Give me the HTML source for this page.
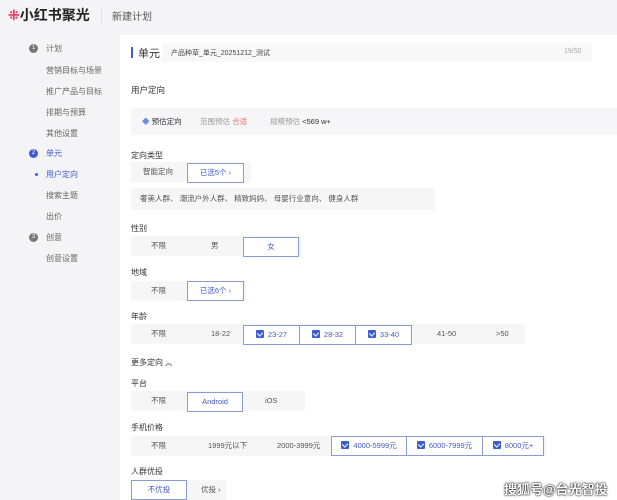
<!DOCTYPE html>
<html><head><meta charset="utf-8"><style>
*{margin:0;padding:0;box-sizing:border-box}
body{width:617px;height:500px;overflow:hidden;background:#f4f4f6;font-family:"Liberation Sans","Noto Sans CJK SC",sans-serif;color:#333;position:relative;font-size:8px}
.a{position:absolute;white-space:nowrap}
.side{color:#666;font-size:8px}
.dot{width:9px;height:9px;border-radius:50%;background:#777;color:#fff;font-size:6px;text-align:center;line-height:9px}
.card{position:absolute;left:120px;top:35px;width:497px;height:465px;background:#fff}
.lbl{font-size:8px;color:#333}
.bar{position:absolute;background:#f6f6f7;height:20px}
.btn{position:absolute;height:20px;border:1px solid #8a9bd6;background:#fff;color:#4459c2;font-size:7.5px;text-align:center;line-height:18px}
.cb{display:inline-block;width:8px;height:8px;background:#3d5ed0;border-radius:1px;vertical-align:-1px;margin-right:4px;position:relative}
.cb:after{content:"";position:absolute;left:2px;top:1px;width:3px;height:4px;border:solid #fff;border-width:0 1px 1px 0;transform:rotate(45deg)}
.t{position:absolute;font-size:7.5px;color:#555;line-height:20px}
</style></head><body>
<div class="a" style="left:8px;top:5px;font-size:14px;font-weight:bold;color:#222"><span style="color:#e8365d">⁜</span>小红书聚光</div>
<div class="a" style="left:101px;top:10px;width:1px;height:12px;background:#ddd"></div>
<div class="a" style="left:112px;top:8px;font-size:10px;color:#555">新建计划</div>

<div class="a dot" style="left:29px;top:44px">1</div><div class="a side" style="left:46px;top:43px">计划</div>
<div class="a side" style="left:46px;top:65px">营销目标与场景</div>
<div class="a side" style="left:46px;top:86px">推广产品与目标</div>
<div class="a side" style="left:46px;top:107px">排期与预算</div>
<div class="a side" style="left:46px;top:128px">其他设置</div>
<div class="a dot" style="left:29px;top:149px;background:#3d5ed0">2</div><div class="a side" style="left:46px;top:148px;color:#3d5ed0">单元</div>
<div class="a" style="left:35px;top:173px;width:3px;height:3px;border-radius:50%;background:#3d5ed0"></div><div class="a side" style="left:46px;top:169px;color:#3d5ed0">用户定向</div>
<div class="a side" style="left:46px;top:190px">搜索主题</div>
<div class="a side" style="left:46px;top:211px">出价</div>
<div class="a dot" style="left:29px;top:233px">3</div><div class="a side" style="left:46px;top:232px">创意</div>
<div class="a side" style="left:46px;top:253px">创意设置</div>

<div class="card"></div>
<div class="a" style="left:131px;top:47px;width:2px;height:11px;background:#3d5ed0"></div>
<div class="a" style="left:138px;top:45px;font-size:11px;color:#333">单元</div>
<div class="a" style="left:162px;top:43px;width:430px;height:19px;background:#f8f8f9"></div>
<div class="a" style="left:171px;top:48px;font-size:7px;color:#444">产品种草_单元_20251212_测试</div>
<div class="a" style="left:564px;top:48px;font-size:7px;color:#aaa">19/50</div>
<div class="a lbl" style="left:131px;top:84px;font-size:8.5px">用户定向</div>
<div class="a" style="left:131px;top:108px;width:486px;height:27px;background:#f6f6f8"></div>
<div class="a" style="left:142px;top:116px;font-size:7.5px;color:#333"><span style="color:#6b8be0">◆</span> 预估定向</div>
<div class="a" style="left:200px;top:116px;font-size:7.5px;color:#999">范围预估 <span style="color:#f06a6a">合适</span></div>
<div class="a" style="left:270px;top:116px;font-size:7.5px;color:#999">规模预估 <span style="color:#333">&lt;569 w+</span></div>

<div class="a lbl" style="left:131px;top:150px">定向类型</div>
<div class="bar" style="left:131px;top:162px;width:120px"></div>
<div class="t" style="left:143px;top:162px">智能定向</div>
<div class="btn" style="left:187px;top:163px;width:57px">已选5个 ›</div>
<div class="bar" style="left:131px;top:188px;width:304px;height:22px"></div>
<div class="t" style="left:140px;top:189px">奢美人群、 潮流户外人群、 精致妈妈、 母婴行业意向、 健身人群</div>

<div class="a lbl" style="left:131px;top:223px">性别</div>
<div class="bar" style="left:131px;top:236px;width:170px"></div>
<div class="t" style="left:151px;top:236px">不限</div><div class="t" style="left:211px;top:236px">男</div>
<div class="btn" style="left:243px;top:237px;width:56px">女</div>

<div class="a lbl" style="left:131px;top:267px">地域</div>
<div class="bar" style="left:131px;top:281px;width:115px"></div>
<div class="t" style="left:151px;top:281px">不限</div>
<div class="btn" style="left:187px;top:281px;width:57px">已选6个 ›</div>

<div class="a lbl" style="left:131px;top:311px">年龄</div>
<div class="bar" style="left:131px;top:324px;width:394px"></div>
<div class="t" style="left:151px;top:324px">不限</div><div class="t" style="left:211px;top:324px">18-22</div>
<div class="btn" style="left:243px;top:325px;width:57px"><span class="cb"></span>23-27</div>
<div class="btn" style="left:299px;top:325px;width:57px"><span class="cb"></span>28-32</div>
<div class="btn" style="left:355px;top:325px;width:57px"><span class="cb"></span>33-40</div>
<div class="t" style="left:437px;top:324px">41-50</div><div class="t" style="left:496px;top:324px">&gt;50</div>

<div class="a lbl" style="left:131px;top:357px">更多定向 <span style="font-size:7px">︽</span></div>
<div class="a lbl" style="left:131px;top:378px">平台</div>
<div class="bar" style="left:131px;top:391px;width:174px"></div>
<div class="t" style="left:151px;top:391px">不限</div>
<div class="btn" style="left:187px;top:392px;width:56px">Android</div>
<div class="t" style="left:265px;top:391px">iOS</div>

<div class="a lbl" style="left:131px;top:422px">手机价格</div>
<div class="bar" style="left:131px;top:436px;width:415px"></div>
<div class="t" style="left:151px;top:436px">不限</div><div class="t" style="left:208px;top:436px">1999元以下</div><div class="t" style="left:277px;top:436px">2000-3999元</div>
<div class="btn" style="left:331px;top:436px;width:76px"><span class="cb"></span>4000-5999元</div>
<div class="btn" style="left:406px;top:436px;width:77px"><span class="cb"></span>6000-7999元</div>
<div class="btn" style="left:482px;top:436px;width:62px"><span class="cb"></span>8000元+</div>

<div class="a lbl" style="left:131px;top:466px">人群优投</div>
<div class="bar" style="left:131px;top:480px;width:95px"></div>
<div class="btn" style="left:131px;top:480px;width:56px">不优投</div>
<div class="t" style="left:201px;top:480px">优投 ›</div>

<div class="a" style="left:504px;top:479px;font-size:13px;font-weight:bold;color:#fff;text-shadow:0 0 2px #000,0 0 1px #000">搜狐号@台光智投</div>
</body></html>
